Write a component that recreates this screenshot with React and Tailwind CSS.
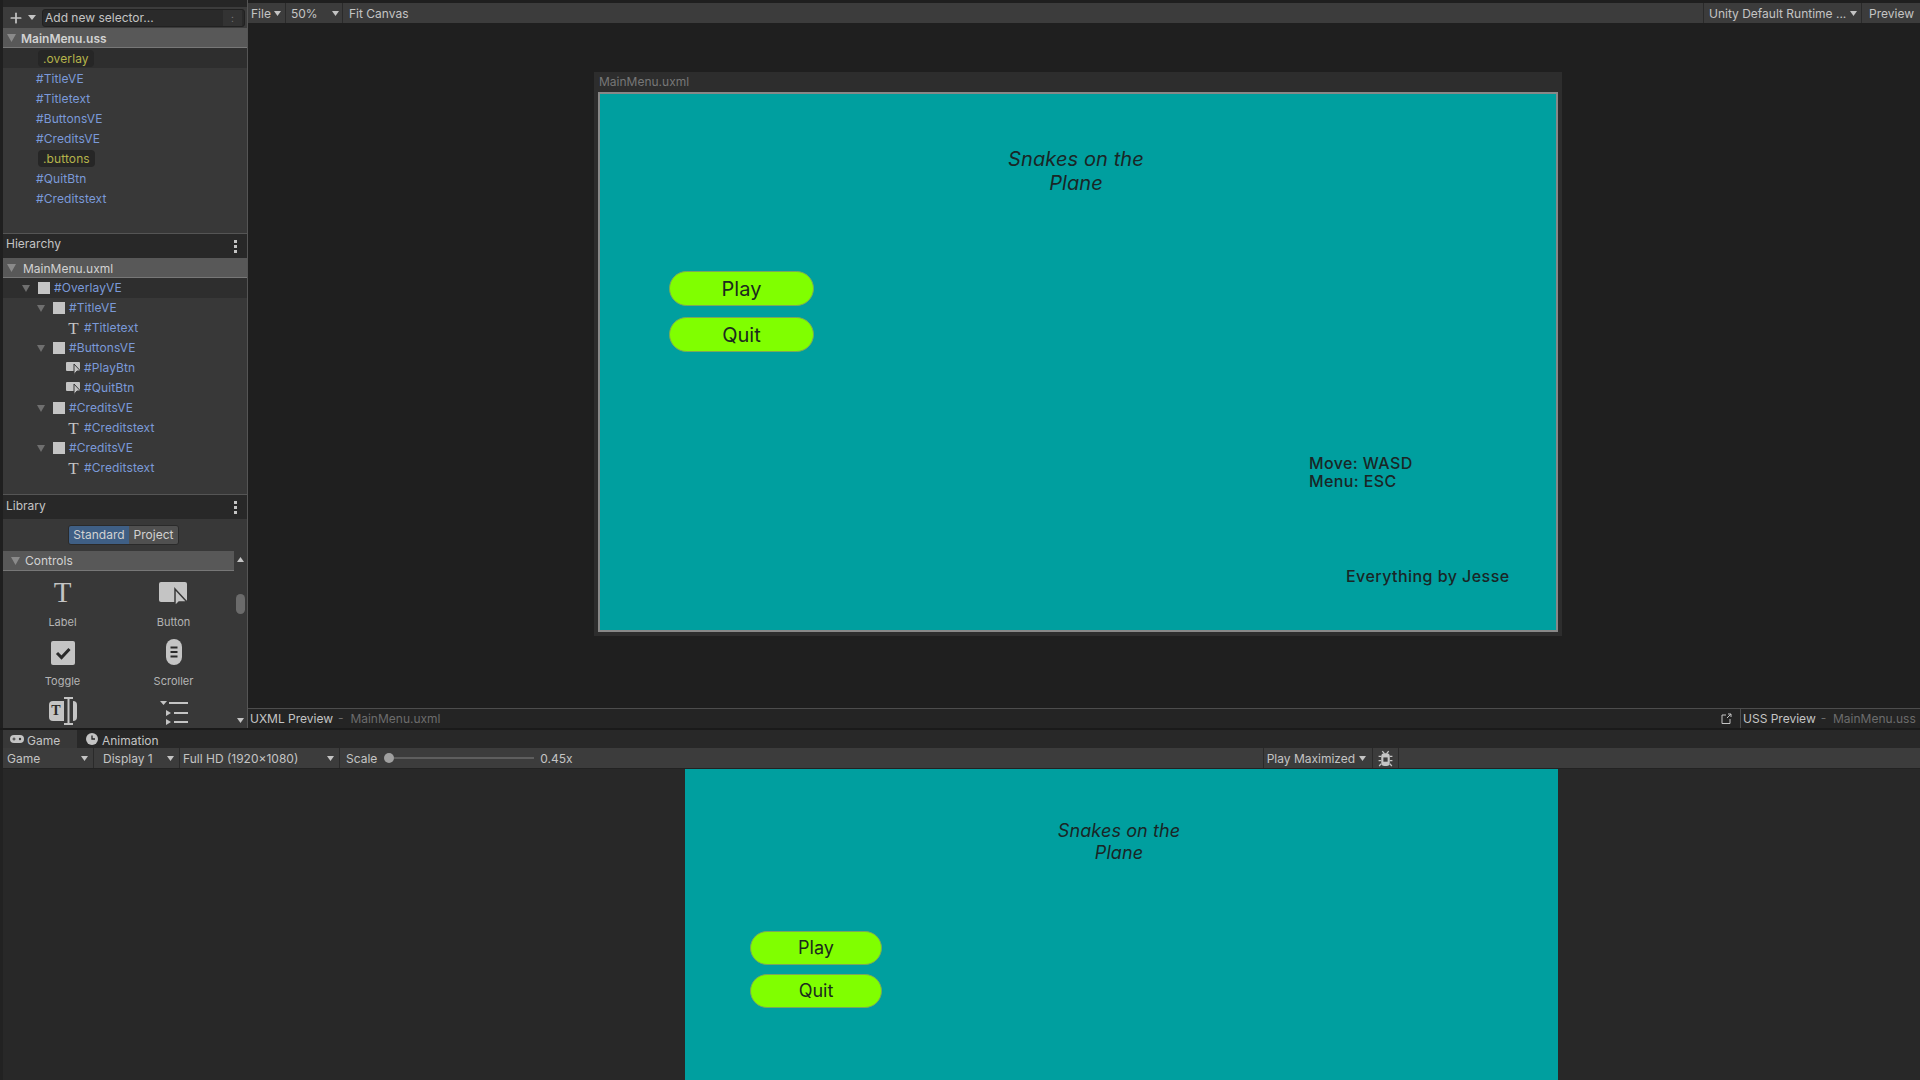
import { Plus } from "lucide-react";

const Tri = ({ className = "" }) => (
  <svg width="8" height="7" viewBox="0 0 8 7" preserveAspectRatio="none" className={`shrink-0 ${className}`}>
    <path d="M0 0h8L4 7z" fill="currentColor" />
  </svg>
);

const Dots = () => (
  <div className="flex flex-col gap-[2px]">
    <span className="w-[3px] h-[3px] bg-[#c4c4c4]" />
    <span className="w-[3px] h-[3px] bg-[#c4c4c4]" />
    <span className="w-[3px] h-[3px] bg-[#c4c4c4]" />
  </div>
);

const BtnIcon = () => (
  <svg width="15" height="14" viewBox="0 0 15 14" className="shrink-0">
    <rect x="0" y="1" width="14" height="9" rx="1" fill="#c4c4c4" />
    <path d="M8 3l6.500 7H11l-3 3.500z" fill="#c4c4c4" stroke="#383838" strokeWidth="1" />
  </svg>
);

const selectors = [
  { t: ".overlay", cls: true, sel: true },
  { t: "#TitleVE" },
  { t: "#Titletext" },
  { t: "#ButtonsVE" },
  { t: "#CreditsVE" },
  { t: ".buttons", cls: true },
  { t: "#QuitBtn" },
  { t: "#Creditstext" },
];

const tree = [
  { t: "#OverlayVE", lvl: 1, sel: true },
  { t: "#TitleVE", lvl: 2 },
  { t: "#Titletext", kind: "T" },
  { t: "#ButtonsVE", lvl: 2 },
  { t: "#PlayBtn", kind: "B" },
  { t: "#QuitBtn", kind: "B" },
  { t: "#CreditsVE", lvl: 2 },
  { t: "#Creditstext", kind: "T" },
  { t: "#CreditsVE", lvl: 2 },
  { t: "#Creditstext", kind: "T" },
];

function SelectorRow({ t, cls, sel }) {
  return (
    <div className={`h-5 flex items-center tracking-[0.1px] ${sel ? "bg-[#2e2e2e]" : ""}`}>
      {cls ? (
        <span className="ml-[35px] px-[5px] h-[17px] leading-[18px] rounded bg-[#262626] text-[#b5b34b]">{t}</span>
      ) : (
        <span className="ml-[33px] pt-[1px] text-[#7b9ad9]">{t}</span>
      )}
    </div>
  );
}

function TreeRow({ t, lvl, kind, sel }) {
  return (
    <div className={`h-5 flex items-center tracking-[0.1px] ${sel ? "bg-[#2e2e2e]" : ""}`}>
      {kind ? (
        <div className="ml-[62px] w-[17px] flex justify-center mr-[1px]">
          {kind === "T" ? (
            <span className="font-['Liberation_Serif'] text-[17px] leading-none text-[#c4c4c4]">T</span>
          ) : (
            <BtnIcon />
          )}
        </div>
      ) : (
        <>
          <Tri className={`text-[#6f6f6f] mr-[8px] ${lvl === 1 ? "ml-[19px]" : "ml-[34px]"}`} />
          <span className="w-3 h-3 bg-[#c4c4c4] mr-[3px]" />
        </>
      )}
      <span className="text-[#7b9ad9] ml-[1px]">{t}</span>
    </div>
  );
}

function PanelHeader({ title, lift }) {
  return (
    <div className="h-[25px] bg-[#282828] border-t border-[#555] flex items-center justify-between pl-[3px] pr-[10px] text-[#c4c4c4]">
      <span className={lift}>{title}</span>
      <Dots />
    </div>
  );
}

function SectionHeader({ title, indent, gap, drop, medium }) {
  return (
    <div className={`h-5 bg-[#585858] border-b border-[#777] flex items-center text-[#d2d2d2] ${indent}`}>
      <Tri className={`text-[#8a8a8a] w-[9px] h-[8px] ${gap}`} />
      <span className={`${drop} ${medium ? "font-semibold" : ""}`}>{title}</span>
    </div>
  );
}

// the third row of the library is cut by the panel edge, so it has no label
function LibItem({ label, children }) {
  return (
    <div className="h-[59px] flex flex-col items-center">
      <div className="h-[35px] flex items-end justify-center">{children}</div>
      {label && <span className="text-[11px] leading-[16px] mt-[8px] text-[#b4b4b4] whitespace-nowrap">{label}</span>}
    </div>
  );
}

function Library() {
  return (
    <div className="flex h-[177px]">
      <div className="w-[231px] overflow-hidden">
        <SectionHeader title="Controls" indent="pl-[8px]" gap="mr-[5px]" drop="pt-0" />
        <div className="grid grid-cols-2 pl-[4px] pr-[5px]">
          <LibItem label="Label">
            <span className="font-['Liberation_Serif'] text-[29px] leading-[27px] text-[#c4c4c4]">T</span>
          </LibItem>
          <LibItem label="Button">
            <svg width="29" height="24" viewBox="0 0 29 24">
              <rect x="0" y="0" width="28" height="20" rx="2" fill="#c4c4c4" />
              <path d="M16 7l12 13h-8l-4 4z" fill="#c4c4c4" stroke="#383838" strokeWidth="1.5" />
            </svg>
          </LibItem>
          <LibItem label="Toggle">
            <svg width="24" height="24" viewBox="0 0 24 24">
              <rect width="24" height="24" rx="2" fill="#c4c4c4" />
              <path d="M6 12l4.500 4.500L18.500 8" fill="none" stroke="#2a2a2a" strokeWidth="3" />
            </svg>
          </LibItem>
          <LibItem label="Scroller">
            <svg width="16" height="26" viewBox="0 0 16 26">
              <rect width="16" height="26" rx="8" fill="#c4c4c4" />
              <path d="M4.500 8.500h7M4.500 13h7M4.500 17.500h7" stroke="#2a2a2a" strokeWidth="2" />
            </svg>
          </LibItem>
          <LibItem>
            <div className="flex items-center h-[28px] mb-[-1px]">
              <span className="w-[15px] h-5 bg-[#c4c4c4] rounded-l-sm font-['Liberation_Serif'] font-bold text-[14px] leading-5 text-center text-[#2a2a2a]">T</span>
              <svg width="9" height="28" viewBox="0 0 9 28">
                <path d="M0 1h9M0 27h9M4.500 1v26" stroke="#c4c4c4" strokeWidth="2" />
              </svg>
              <span className="w-[4px] h-5 bg-[#c4c4c4] rounded-r-sm" />
            </div>
          </LibItem>
          <LibItem>
            <svg width="28" height="24" viewBox="0 0 28 24" className="mb-[-1px]">
              <path d="M0 0h7L3.500 4zM6 9v6l5-3zM6 18v6l5-3z" fill="#c4c4c4" />
              <path d="M9 2h19M14 12h14M14 21h14" stroke="#c4c4c4" strokeWidth="2" />
            </svg>
          </LibItem>
        </div>
      </div>
      <div className="w-[13px] flex flex-col items-center bg-[#383838] pt-[6px] text-[#c4c4c4]">
        <Tri className="rotate-180 w-[7px] h-[5px]" />
        <span className="w-[9px] h-5 mt-[32px] rounded-full bg-[#6b6b6b] shrink-0" />
        <Tri className="w-[7px] h-[5px] mt-[104px]" />
      </div>
    </div>
  );
}

function Sidebar() {
  return (
    <div className="w-[248px] shrink-0 pl-[3px] border-r border-[#555] bg-[#1f1f1f] flex flex-col">
      <div className="h-[7px] bg-[#262626]" />
      <div className="h-[21px] bg-[#3c3c3c] flex items-center">
        <Plus size={16} strokeWidth={2.6} className="text-[#c4c4c4] ml-[5px]" />
        <Tri className="text-[#c4c4c4] w-[8px] h-[5px] ml-[4px]" />
        <div className="ml-[6px] w-[203px] h-[18px] flex items-center justify-between bg-[#2a2a2a] border border-[#212121] rounded-[3px] text-[#c4c4c4]">
          <span className="pl-[2px]">Add new selector...</span>
          <span className="w-[19px] mr-[2px] text-center bg-[#333] text-[#777] text-[10px] leading-[16px]">:</span>
        </div>
      </div>
      <div className="bg-[#383838] h-[205px]">
        <SectionHeader title="MainMenu.uss" indent="pl-[4px]" gap="mr-[5px]" drop="pt-[3px]" medium />
        {selectors.map((s, i) => <SelectorRow key={i} {...s} />)}
      </div>
      <PanelHeader title="Hierarchy" lift="pb-[4px]" />
      <div className="bg-[#383838] h-[236px]">
        <SectionHeader title="MainMenu.uxml" indent="pl-[4px]" gap="mr-[7px]" drop="pt-[2px]" />
        {tree.map((r, i) => <TreeRow key={i} {...r} />)}
      </div>
      <PanelHeader title="Library" lift="pb-[3px]" />
      <div className="bg-[#383838] flex-1 overflow-hidden">
        <div className="h-[32px] flex items-center justify-center pr-[3px]">
          <div className="flex h-5 rounded-[3px] overflow-hidden border border-[#2a2a2a] text-[#d2d2d2]">
            <span className="leading-[18px] bg-[#3f5f85] w-[60px] text-center">Standard</span>
            <span className="leading-[18px] bg-[#505050] w-[49px] text-center">Project</span>
          </div>
        </div>
        <Library />
      </div>
    </div>
  );
}

function TopBar() {
  return (
    <div className="h-[20px] bg-[#3c3c3c] mt-[3px] flex items-center text-[#c4c4c4] shrink-0">
      <div className="w-[38px] h-full flex items-center pl-[3px] gap-[3px] border-r border-[#2a2a2a]">
        <span className="pt-[1px]">File</span> <Tri className="w-[7px] h-[5px]" />
      </div>
      <div className="w-[57px] h-full flex items-center justify-between pl-[5px] pr-[3px] border-r border-[#2a2a2a]">
        <span className="pt-[1px]">50%</span> <Tri className="w-[7px] h-[5px]" />
      </div>
      <span className="ml-[6px] pt-[1px]">Fit Canvas</span>
      <div className="ml-auto w-[159px] h-full flex items-center justify-between pl-[5px] pr-[4px] border-l border-[#2a2a2a] border-r">
        <span className="pt-[1px]">Unity Default Runtime ...</span>
        <Tri className="w-[7px] h-[5px]" />
      </div>
      <span className="w-[58px] pl-[7px] pt-[1px]">Preview</span>
    </div>
  );
}

function GameButton({ label, className }) {
  return (
    <div className={`rounded-full bg-[#80ff00] border border-[#79a85a] flex items-center justify-center text-[#1b2a1e] ${className}`}>
      {label}
    </div>
  );
}

function Canvas() {
  return (
    <div className="flex-1 bg-[#1f1f1f] pl-[346px] pt-[49px]">
      <div className="w-[968px] h-[564px] bg-[#2d2d2d] px-[4px] pb-[4px]">
        <div className="h-[20px] leading-[20px] text-[#777] pl-[1px]">MainMenu.uxml</div>
        <div className="h-[540px] border-2 border-[#888] bg-[#009f9f] text-[#1a2626] overflow-hidden">
          <div className="ml-[376px] w-[200px] pt-[53px] text-center italic text-[20px] leading-[24px] tracking-[0.1px]">
            Snakes on the<br />Plane
          </div>
          <div className="ml-[69px] w-[145px] mt-[76px] flex flex-col gap-[11px] text-[20px]">
            <GameButton label="Play" className="h-[35px]" />
            <GameButton label="Quit" className="h-[35px]" />
          </div>
          <div className="ml-[709px] mt-[102px] text-[16px] leading-[18px] font-medium tracking-[0.4px]">
            Move: WASD<br />Menu: ESC
          </div>
          <div className="ml-[746px] mt-[76px] text-[16px] leading-[20px] font-medium tracking-[0.45px]">
            Everything by Jesse
          </div>
        </div>
      </div>
    </div>
  );
}

function PreviewBar() {
  return (
    <div className="h-[20px] bg-[#242424] border-t border-[#4d4d4d] flex items-center text-[#c4c4c4] shrink-0">
      <span className="ml-[2px]">UXML Preview</span>
      <span className="ml-[5px] text-[#6c6c6c]">- &nbsp;MainMenu.uxml</span>
      <svg width="11" height="11" viewBox="0 0 11 11" className="ml-auto text-[#c4c4c4]">
        <path d="M5 2H1v8.500h8V6M6 5l4-4M7 1h3v3" fill="none" stroke="currentColor" />
      </svg>
      <div className="ml-[8px] w-[180px] h-full pl-[2px] border-l border-[#4d4d4d] flex items-center whitespace-nowrap">
        <span>USS Preview</span>
        <span className="ml-[5px] text-[#6c6c6c]">- &nbsp;MainMenu.uss</span>
      </div>
    </div>
  );
}

function BugIcon() {
  return (
    <svg width="15" height="17" viewBox="0 0 14 16" className="text-[#c4c4c4]">
      <path d="M4 1l2 2.500M10 1L8 3.500M0.500 6H3M13.500 6H11M0.500 10H3M13.500 10H11M1 15L3 13M13 15L11 13" stroke="currentColor" strokeWidth="1.200" />
      <rect x="3" y="3" width="8" height="12" rx="3" fill="currentColor" />
      <rect x="5" y="7" width="4" height="4" fill="#3c3c3c" />
    </svg>
  );
}

function GamePanel() {
  return (
    <div className="h-[352px] border-t-2 border-[#1a1a1a] flex flex-col shrink-0 pl-[3px] bg-[#222]">
      <div className="h-[18px] bg-[#282828] flex text-[#c4c4c4] shrink-0">
        <div className="w-[74px] bg-[#383838] flex items-center pl-[7px] gap-[3px]">
          <svg width="14" height="8" viewBox="0 0 14 8">
            <rect width="14" height="8" rx="4" fill="#c4c4c4" />
            <path d="M2.500 4h3M4 2.500v3" stroke="#383838" />
            <circle cx="10" cy="4" r="1.200" fill="#383838" />
          </svg>
          <span className="pt-[3px]">Game</span>
        </div>
        <div className="flex items-center pl-[9px] gap-[4px]">
          <svg width="12" height="12" viewBox="0 0 12 12">
            <circle cx="6" cy="6" r="6" fill="#c4c4c4" />
            <path d="M6 2.500V6h3" fill="none" stroke="#282828" strokeWidth="1.300" />
          </svg>
          <span className="pt-[3px]">Animation</span>
        </div>
      </div>
      <div className="h-[21px] bg-[#3c3c3c] border-b border-[#222] flex items-center text-[#c4c4c4] shrink-0">
        <div className="w-[91px] h-full flex items-center justify-between pl-[4px] pr-[5px] border-r border-[#2a2a2a]">
          <span className="pt-[1px]">Game</span> <Tri className="w-[7px] h-[5px]" />
        </div>
        <div className="w-[86px] h-full flex items-center justify-between pl-[9px] pr-[5px] border-r border-[#2a2a2a]">
          <span className="pt-[1px]">Display 1</span> <Tri className="w-[7px] h-[5px]" />
        </div>
        <div className="w-[160px] h-full flex items-center justify-between pl-[3px] pr-[5px] border-r border-[#2a2a2a]">
          <span className="pt-[1px]">Full HD (1920x1080)</span> <Tri className="w-[7px] h-[5px]" />
        </div>
        <span className="ml-[6px] pt-[1px]">Scale</span>
        <div className="ml-[7px] w-[150px] flex items-center">
          <span className="w-[10px] h-[10px] rounded-full bg-[#a0a0a0] shrink-0" />
          <span className="flex-1 h-[2px] bg-[#5e5e5e]" />
        </div>
        <span className="ml-[6px] pt-[1px]">0.45x</span>
        <div className="ml-[690px] h-full w-[110px] flex items-center gap-[4px] pl-[3px] border-l border-r border-[#2a2a2a]">
          <span className="pt-[1px]">Play Maximized</span> <Tri className="w-[7px] h-[5px]" />
        </div>
        <div className="w-[26px] h-full flex items-center justify-center border-r border-[#2a2a2a]">
          <BugIcon />
        </div>
      </div>
      <div className="flex-1 min-h-0 bg-[#282828] pl-[682px] pr-[362px]">
        <div className="h-full bg-[#009f9f] text-[#1a2626] overflow-hidden">
          <div className="ml-[334px] w-[200px] pt-[51px] text-center italic text-[18px] leading-[22px] tracking-[0.1px]">
            Snakes on the<br />Plane
          </div>
          <div className="ml-[65px] w-[132px] mt-[67px] flex flex-col gap-[9px] text-[18px]">
            <GameButton label="Play" className="h-[34px]" />
            <GameButton label="Quit" className="h-[34px]" />
          </div>
        </div>
      </div>
    </div>
  );
}

export default function App() {
  return (
    <div className="w-[1920px] h-[1080px] overflow-hidden flex flex-col bg-[#1f1f1f] font-['Inter',sans-serif] text-[12px] leading-[16px]">
      <div className="h-[728px] flex shrink-0">
        <Sidebar />
        <div className="flex-1 flex flex-col min-w-0">
          <TopBar />
          <Canvas />
          <PreviewBar />
        </div>
      </div>
      <GamePanel />
    </div>
  );
}
